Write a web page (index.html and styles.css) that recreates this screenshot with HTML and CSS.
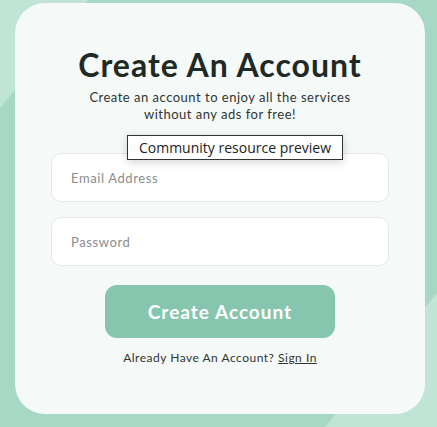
FILE: index.html
```html
<!DOCTYPE html>
<html lang="en">
<head>
<meta charset="utf-8">
<title>Create An Account</title>
<link rel="stylesheet" href="styles.css">
</head>
<body>
<div class="bg-shape bg-shape--tl"></div>
<div class="bg-shape bg-shape--br"></div>
<main class="card">
  <h1 class="title">Create An Account</h1>
  <p class="subtitle">Create an account to enjoy all the services<br>without any ads for free!</p>
  <form class="form">
    <input class="field" type="email" placeholder="Email Address">
    <input class="field" type="password" placeholder="Password">
    <button class="submit" type="button">Create Account</button>
  </form>
  <p class="signin">Already Have An Account? <a href="#" class="signin-link">Sign In</a></p>
  <div class="tooltip">Community resource preview</div>
</main>
</body>
</html>
```

FILE: styles.css
```css
* { box-sizing: border-box; }
html, body { margin: 0; padding: 0; }
body {
  width: 437px;
  height: 427px;
  overflow: hidden;
  background: #a6d8c5;
  position: relative;
  font-family: "Lato", "Noto Sans", sans-serif;
  padding: 3px 12px 13px 15px;
}
.bg-shape {
  position: absolute;
  background: #c0e4d5;
}
.bg-shape--tl {
  left: 0; top: 0;
  width: 88px; height: 108px;
  clip-path: polygon(0 0, 100% 0, 0 100%);
}
.bg-shape--br {
  right: 0; bottom: 0;
  width: 112px; height: 134px;
  clip-path: polygon(100% 0, 100% 100%, 0 100%);
}
.card {
  position: relative;
  width: 410px;
  height: 411px;
  background: #f5f9f8;
  border-radius: 30px;
  display: flex;
  flex-direction: column;
  align-items: center;
  padding-top: 43px;
}
.title {
  margin: 0;
  font-size: 32px;
  font-weight: 700;
  color: #1f2925;
  letter-spacing: 1px;
  line-height: 38px;
}
.subtitle {
  margin: 5px 0 0;
  font-size: 13px;
  line-height: 17px;
  color: #2f3532;
  text-align: center;
  letter-spacing: 0.5px;
}
.form {
  margin-top: 30px;
  width: 338px;
  display: flex;
  flex-direction: column;
  align-items: center;
  gap: 15px;
}
.field {
  width: 100%;
  height: 49px;
  border: 1px solid #e6eae8;
  border-radius: 10px;
  background: #ffffff;
  padding: 0 19px;
  font-family: inherit;
  font-size: 13px;
  letter-spacing: 0.6px;
  color: #333;
}
.field::placeholder { color: #8a8d8c; }
.submit {
  margin-top: 4px;
  width: 230px;
  height: 53px;
  border: none;
  border-radius: 12px;
  background: #86c6ae;
  color: #ffffff;
  font-family: inherit;
  font-size: 19px;
  font-weight: 700;
  letter-spacing: 1px;
}
.signin {
  margin: 12px 0 0;
  font-size: 12px;
  color: #2f3532;
  letter-spacing: 0.5px;
}
.signin-link { color: #2f3532; text-decoration: underline; }
.tooltip {
  position: absolute;
  left: 112px;
  top: 132px;
  width: 216px;
  height: 25px;
  background: #ffffff;
  border: 1px solid #333;
  box-shadow: 0 2px 10px rgba(0,0,0,0.18);
  font-family: "Open Sans", "DejaVu Sans", sans-serif;
  font-size: 14px;
  line-height: 23px;
  text-align: center;
  color: #222;
}
```
